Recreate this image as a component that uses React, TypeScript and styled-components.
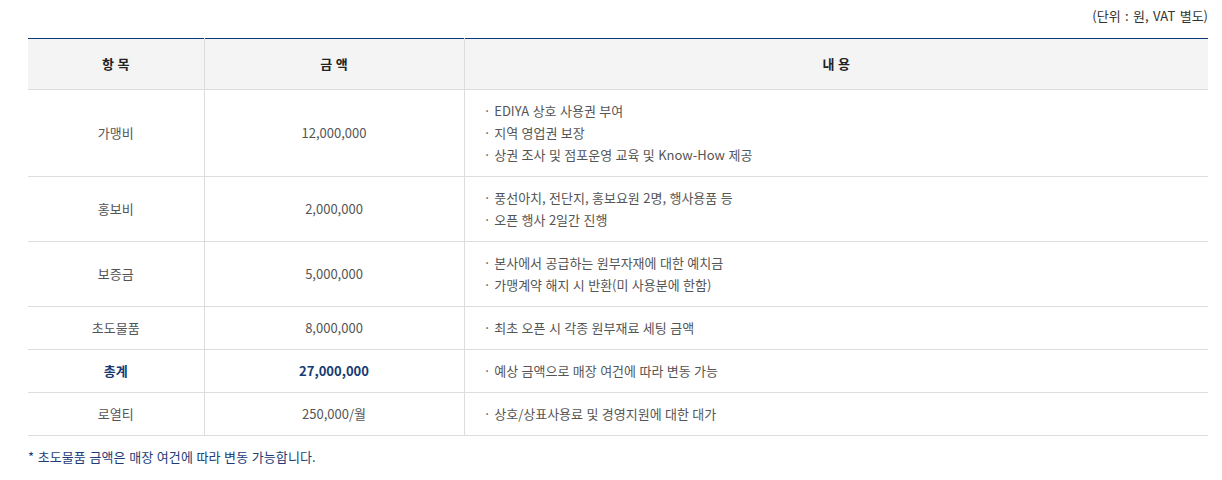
import React from 'react'
import styled, { createGlobalStyle } from 'styled-components'

type Row = {
  item: string
  amount: string
  details: string[]
  total?: boolean
}

const rows: Row[] = [
  {
    item: '가맹비',
    amount: '12,000,000',
    details: ['EDIYA 상호 사용권 부여', '지역 영업권 보장', '상권 조사 및 점포운영 교육 및 Know-How 제공'],
  },
  {
    item: '홍보비',
    amount: '2,000,000',
    details: ['풍선아치, 전단지, 홍보요원 2명, 행사용품 등', '오픈 행사 2일간 진행'],
  },
  {
    item: '보증금',
    amount: '5,000,000',
    details: ['본사에서 공급하는 원부자재에 대한 예치금', '가맹계약 해지 시 반환(미 사용분에 한함)'],
  },
  { item: '초도물품', amount: '8,000,000', details: ['최초 오픈 시 각종 원부재료 세팅 금액'] },
  { item: '총계', amount: '27,000,000', details: ['예상 금액으로 매장 여건에 따라 변동 가능'], total: true },
  { item: '로열티', amount: '250,000/월', details: ['상호/상표사용료 및 경영지원에 대한 대가'] },
]

export default function App() {
  return (
    <>
      <GlobalStyle />
      <Page>
        <Unit>(단위 : 원, VAT 별도)</Unit>
        <Table>
          <colgroup>
            <col style={{ width: 176 }} />
            <col style={{ width: 260 }} />
            <col />
          </colgroup>
          <thead>
            <tr>
              <Th>항 목</Th>
              <Th>금 액</Th>
              <Th>내 용</Th>
            </tr>
          </thead>
          <tbody>
            {rows.map((row) => (
              <tr key={row.item}>
                <Td $total={row.total}>{row.item}</Td>
                <Td $total={row.total}>{row.amount}</Td>
                <Td $left>
                  {row.details.map((line) => (
                    <Line key={line}>· {line}</Line>
                  ))}
                </Td>
              </tr>
            ))}
          </tbody>
        </Table>
        <Note>* 초도물품 금액은 매장 여건에 따라 변동 가능합니다.</Note>
      </Page>
    </>
  )
}

const GlobalStyle = createGlobalStyle`
  body {
    margin: 0;
    background: #fff;
    font-family: "Noto Sans CJK KR", "Noto Sans", sans-serif;
    font-size: 13px;
    color: #555;
    word-spacing: 0.5px;
  }
`
const Page = styled.div`
  padding: 5px 14px 0 28px;
`
const Unit = styled.p`
  margin: 0 0 11px;
  text-align: right;
  line-height: 22px;
  color: #333;
  word-spacing: 1.5px;
`
const Table = styled.table`
  width: 100%;
  border-collapse: collapse;
  table-layout: fixed;
  border-top: 1px solid #0b3a78;
`
const Th = styled.th`
  padding: 14px 0;
  line-height: 22px;
  font-weight: 700;
  color: #222;
  background: #f4f4f4;
  border-bottom: 1px solid #ddd;
  & + & {
    border-left: 1px solid #ddd;
  }
`
const Td = styled.td<{ $total?: boolean; $left?: boolean }>`
  padding: ${(p) => (p.$left ? '10px 19px' : '10px 0')};
  line-height: 22px;
  text-align: ${(p) => (p.$left ? 'left' : 'center')};
  vertical-align: middle;
  border-bottom: 1px solid #ddd;
  color: ${(p) => (p.$total ? '#163a73' : '#555')};
  font-weight: ${(p) => (p.$total ? 700 : 400)};
  & + & {
    border-left: 1px solid #ddd;
  }
`
const Line = styled.div``
const Note = styled.p`
  margin: 10px 0 0;
  line-height: 22px;
  color: #1d3c78;
  letter-spacing: 0.1px;
`
